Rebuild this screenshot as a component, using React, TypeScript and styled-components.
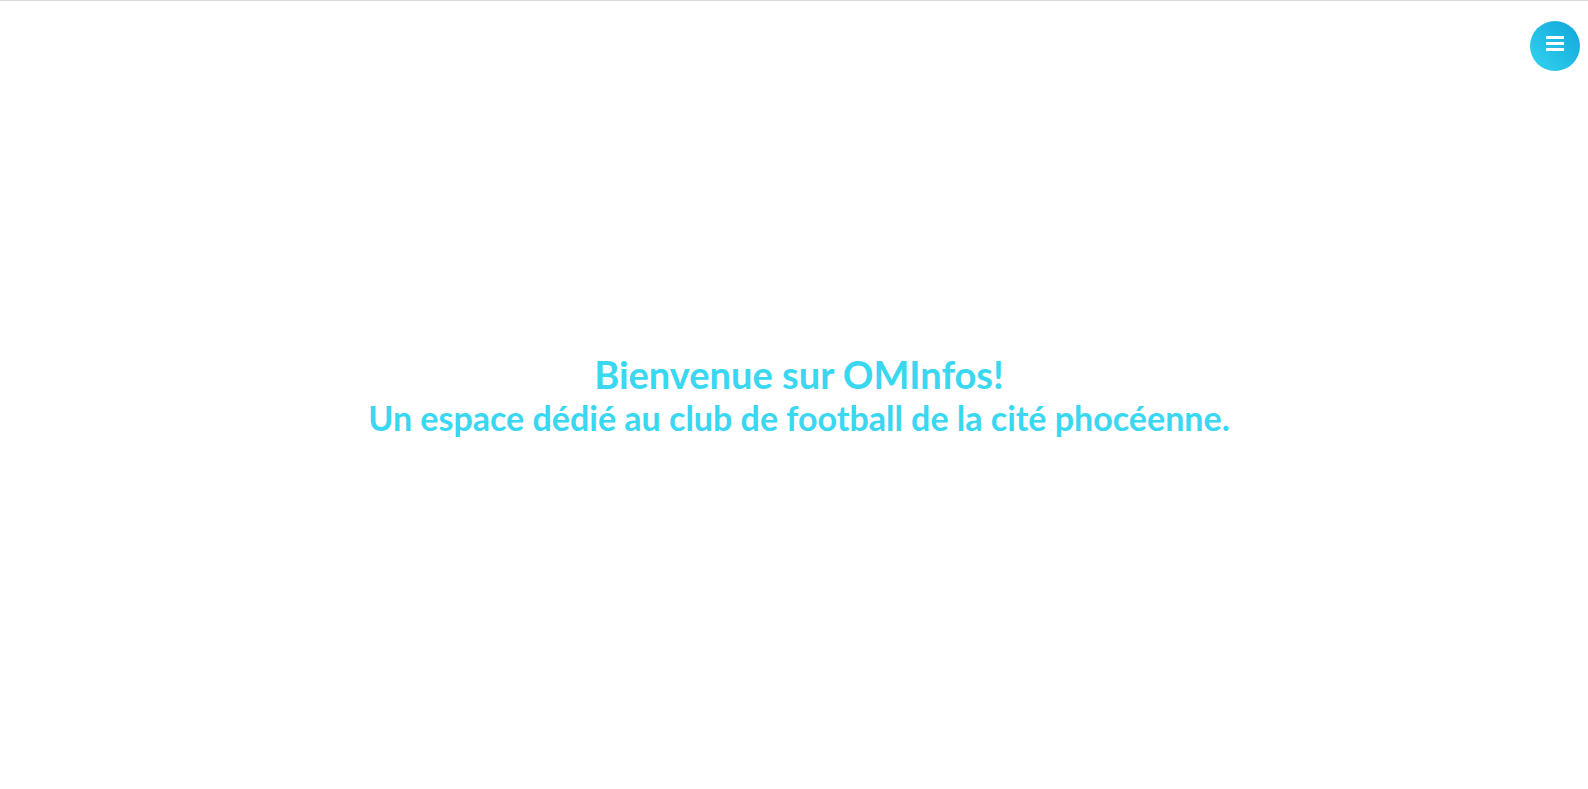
import React from "react";
import styled, { createGlobalStyle } from "styled-components";

const GlobalStyle = createGlobalStyle`
  * { box-sizing: border-box; }
  body { margin: 0; background: #fff; font-family: Lato, "Open Sans", sans-serif; }
`;

const Page = styled.div`
  min-height: 100vh;
  display: flex;
  flex-direction: column;
  border-top: 1px solid #d9d9d9;
`;

const MenuButton = styled.button`
  position: fixed;
  top: 21px;
  right: 8px;
  width: 50px;
  height: 50px;
  padding: 0 0 5px;
  border: 0;
  border-radius: 50%;
  display: flex;
  align-items: center;
  justify-content: center;
  background: linear-gradient(45deg, #34d4ef, #10a5da);
  cursor: pointer;
`;

const Welcome = styled.main`
  flex: 1;
  display: flex;
  flex-direction: column;
  align-items: center;
  justify-content: center;
  padding: 0 0 2px 10px;
  text-align: center;
  color: #39d7f0;
`;

const Title = styled.h1`
  margin: 0;
  font-size: 38px;
  line-height: 48px;
  font-weight: 700;
`;

const Subtitle = styled.h2`
  margin: 0;
  font-size: 34px;
  line-height: 40px;
  font-weight: 700;
`;

export default function App() {
  return (
    <Page>
      <GlobalStyle />
      <MenuButton type="button" aria-label="Menu">
        <svg width="18" height="17" viewBox="0 0 18 17" fill="#fff" aria-hidden="true">
          <rect x="0" y="1" width="18" height="3" rx="0.500" />
          <rect x="0" y="7" width="18" height="3" rx="0.500" />
          <rect x="0" y="13" width="18" height="3" rx="0.500" />
        </svg>
      </MenuButton>
      <Welcome>
        <Title>Bienvenue sur OMInfos!</Title>
        <Subtitle>Un espace dédié au club de football de la cité phocéenne.</Subtitle>
      </Welcome>
    </Page>
  );
}
